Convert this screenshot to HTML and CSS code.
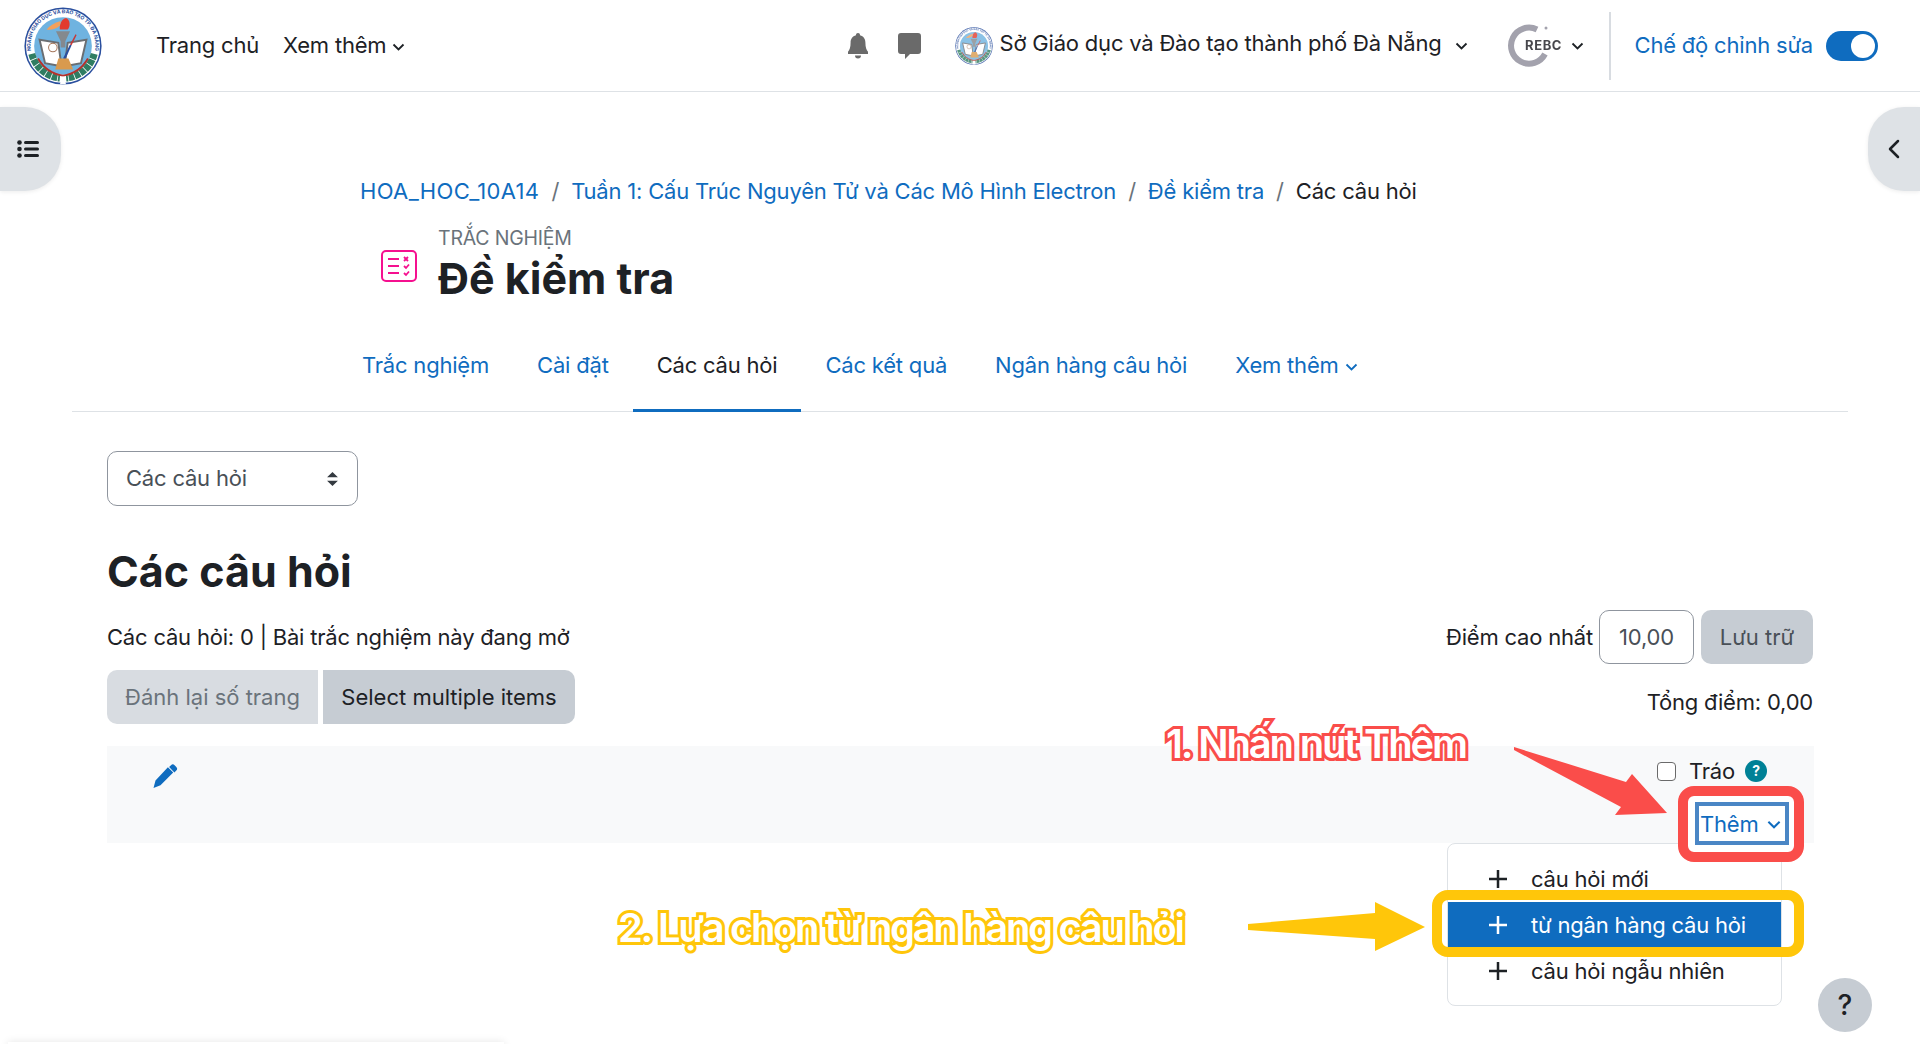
FILE: index.html
```html
<!DOCTYPE html>
<html lang="vi">
<head>
  <meta charset="UTF-8" />
  <meta name="viewport" content="width=device-width, initial-scale=1.0"/>
  <title>Các câu hỏi</title>
  <link rel="stylesheet" href="styles.css">
</head>
<body>
  <svg class="defs" width="0" height="0">
    <defs>
      <path id="arcText" d="M9 56a41.500 41.500 0 1 1 82 0"/>
      <symbol id="logo" viewBox="0 0 100 100">
        <circle cx="50" cy="50" r="49.500" fill="#2a4f9e"/>
        <circle cx="50" cy="50" r="47.500" fill="#fff"/>
        <circle cx="50" cy="50" r="37" fill="#6fb3e0"/>
        <text class="logo-ring"><textPath href="#arcText" startOffset="50%" text-anchor="middle">NGÀNH GIÁO DỤC VÀ ĐÀO TẠO TP. ĐÀ NẴNG</textPath></text>
        <path d="M10 60A41 41 0 0 0 46 91M90 60A41 41 0 0 1 54 91" fill="none" stroke="#2f7d62" stroke-width="9" stroke-dasharray="7 1"/>
        <path d="M18 66c7 12 17 20 32 22 15-2 25-10 32-22" fill="none" stroke="#b5312c" stroke-width="2.500"/>
        <path d="M46 99l4-11 4 11z" fill="#fff"/>
        <path d="M20 42l24 4 4 30-21-4z" fill="#fff" stroke="#6a6e72" stroke-width="2.500"/>
        <path d="M80 42l-24 4-4 30 21-4z" fill="#fff" stroke="#6a6e72" stroke-width="2.500"/>
        <path d="M41 31h18l-6 13v8h-6v-8z" fill="#84898e"/>
        <path d="M46 29c-1-6 2-14 8-15 5 2 6 10 2 15z" fill="#e23b2e"/>
        <path d="M29 29c4-5 10-9 18-11l-1 6c-5 4-11 6-17 5z" fill="#f2a05a"/>
        <path d="M50 66l9-18 2 1-8 18z" fill="#2a4f9e"/>
        <path d="M59 48l7-13 1.500 1-6.500 13z" fill="#c43a3a"/>
        <path d="M44 66h13l6 14H40z" fill="#d99a4e"/>
        <circle cx="37" cy="52" r="5.500" fill="none" stroke="#a5765a" stroke-width="1.300"/>
      </symbol>
    </defs>
  </svg>

  <header class="navbar">
    <svg class="site-logo" aria-hidden="true"><use href="#logo"/></svg>
    <nav class="nav-main">
      <a class="nav-link">Trang chủ</a>
      <a class="nav-link">Xem thêm
        <svg class="chev" viewBox="0 0 12 8"><path d="M1 1.500l5 5 5-5"/></svg>
      </a>
    </nav>
    <div class="nav-right">
      <svg class="ico-bell" viewBox="0 0 20 26"><path d="M10 0a2 2 0 0 1 2 2.200c3.600.8 5.400 3.800 5.400 7.300 0 5 1 7.500 2.600 9.300v2.200H0v-2.200c1.600-1.800 2.600-4.300 2.600-9.300C2.600 6 4.400 3 8 2.200A2 2 0 0 1 10 0zM7 22.500h6a3 3 0 0 1-6 0z"/></svg>
      <svg class="ico-chat" viewBox="0 0 23 26"><path d="M3 0h17a3 3 0 0 1 3 3v15a3 3 0 0 1-3 3h-8l-5 5v-5H3a3 3 0 0 1-3-3V3a3 3 0 0 1 3-3z"/></svg>
      <div class="org">
        <svg class="org-logo" aria-hidden="true"><use href="#logo"/></svg>
        <span class="org-name">Sở Giáo dục và Đào tạo thành phố Đà Nẵng</span>
        <svg class="chev" viewBox="0 0 12 8"><path d="M1 1.500l5 5 5-5"/></svg>
      </div>
      <div class="user">
        <svg class="user-pic" viewBox="0 0 45 42">
          <path d="M29 4.500A18 18 0 1 0 37 29" fill="none" stroke="#a3a2ad" stroke-width="6"/>
          <circle cx="38" cy="3" r="1.500" fill="#a3a2ad"/>
          <text x="17" y="25">REBC</text>
        </svg>
        <svg class="chev" viewBox="0 0 12 8"><path d="M1 1.500l5 5 5-5"/></svg>
      </div>
      <div class="edit-mode">
        <span>Chế độ chỉnh sửa</span>
        <span class="toggle"><i></i></span>
      </div>
    </div>
  </header>

  <button class="drawer drawer-left">
    <svg viewBox="0 0 22 18" width="22" height="18"><g fill="#1d2125"><circle cx="2.500" cy="2.500" r="2.300"/><circle cx="2.500" cy="9" r="2.300"/><circle cx="2.500" cy="15.500" r="2.300"/><rect x="7" y="1" width="15" height="3" rx="1.500"/><rect x="7" y="7.500" width="15" height="3" rx="1.500"/><rect x="7" y="14" width="15" height="3" rx="1.500"/></g></svg>
  </button>
  <button class="drawer drawer-right">
    <svg viewBox="0 0 12 20" width="12" height="20"><path d="M10 2L2 10l8 8" fill="none" stroke="#1d2125" stroke-width="2.500" stroke-linecap="round" stroke-linejoin="round"/></svg>
  </button>

  <main class="page">
    <ol class="crumbs">
      <li><a class="course">HOA_HOC_10A14</a></li>
      <li><a>Tuần 1: Cấu Trúc Nguyên Tử và Các Mô Hình Electron</a></li>
      <li><a>Đề kiểm tra</a></li>
      <li>Các câu hỏi</li>
    </ol>

    <div class="page-head">
      <svg class="quiz-icon" viewBox="0 0 36 32">
        <rect x="1" y="1" width="34" height="30" rx="4" fill="none" stroke="#f5108f" stroke-width="2"/>
        <path d="M7 9h11M7 16h11M7 23h11" stroke="#f5108f" stroke-width="2" fill="none"/>
        <path d="M23 7l4 4m0-4l-4 4M23 16l2 2 3-3.500M23 23l2 2 3-3.500" stroke="#f5108f" stroke-width="1.800" fill="none"/>
      </svg>
      <div>
        <div class="head-kicker">TRẮC NGHIỆM</div>
        <h1>Đề kiểm tra</h1>
      </div>
    </div>

    <nav class="tabs">
      <a>Trắc nghiệm</a>
      <a>Cài đặt</a>
      <a class="active">Các câu hỏi</a>
      <a>Các kết quả</a>
      <a>Ngân hàng câu hỏi</a>
      <a>Xem thêm <svg class="chev" viewBox="0 0 12 8"><path d="M1 1.500l5 5 5-5"/></svg></a>
    </nav>

    <section class="content">
      <div class="fake-select">
        <span>Các câu hỏi</span>
        <svg viewBox="0 0 12 18" width="13" height="16" preserveAspectRatio="none"><path d="M6 1l5 6H1zM6 17l5-6H1z" fill="#343a40"/></svg>
      </div>

      <h2>Các câu hỏi</h2>

      <div class="info-row">
        <p>Các câu hỏi: 0 | Bài trắc nghiệm này đang mở</p>
        <div class="grade">
          <label>Điểm cao nhất</label>
          <span class="grade-input">10,00</span>
          <button class="btn btn-save">Lưu trữ</button>
        </div>
      </div>

      <div class="tools-row">
        <div class="btn-group">
          <button class="btn btn-muted">Đánh lại số trang</button>
          <button class="btn btn-second">Select multiple items</button>
        </div>
        <span class="total">Tổng điểm: 0,00</span>
      </div>

      <div class="band">
        <svg class="pencil" viewBox="0 0 24 24"><path d="M17.500 1.200a2.600 2.600 0 0 1 3.600 0l1.700 1.700a2.600 2.600 0 0 1 0 3.600l-1.900 1.900-5.300-5.300zM14.400 3.300l5.300 5.300L7 21.300 0 24l2-7.400z"/></svg>
        <div class="band-right">
          <div class="shuffle">
            <span class="check"></span>
            <span>Tráo</span>
            <span class="help-dot">?</span>
          </div>
          <div class="add-btn">Thêm <svg class="chev" viewBox="0 0 12 8"><path d="M1 1.500l5 5 5-5"/></svg></div>
        </div>
      </div>
    </section>
  </main>

  <ul class="add-menu">
    <li><svg class="plus" viewBox="0 0 18 18"><path d="M9 0v18M0 9h18"/></svg>câu hỏi mới</li>
    <li class="on"><svg class="plus" viewBox="0 0 18 18"><path d="M9 0v18M0 9h18"/></svg>từ ngân hàng câu hỏi</li>
    <li><svg class="plus" viewBox="0 0 18 18"><path d="M9 0v18M0 9h18"/></svg>câu hỏi ngẫu nhiên</li>
  </ul>

  <button class="help-fab">?</button>
  <div class="foot-shadow"></div>

  <!-- ghi chu tren anh -->
  <div class="note note-red">1. Nhấn nút Thêm</div>
  <div class="note note-yellow">2. Lựa chọn từ ngân hàng câu hỏi</div>
  <div class="mark mark-red"></div>
  <div class="mark mark-yellow"></div>
  <svg class="arrows" viewBox="0 0 1920 1044">
    <polygon points="1514,747 1626,782 1632,774 1667,813 1615,815 1621,807 1514,750" fill="#fa4d4a"/>
    <polygon points="1248,924 1375,913 1375,902 1425,927 1375,951 1375,939 1248,930" fill="#ffc60a"/>
  </svg>
</body>
</html>
```

FILE: styles.css
```css
* {
  box-sizing: border-box;
}
html, body {
  margin: 0;
  height: 100%;
}
body {
  position: relative;
  width: 1920px;
  height: 1044px;
  overflow: hidden;
  background: #fff;
  color: #1d2125;
  font-family: Inter, "Noto Sans", sans-serif;
  font-size: 22px;
  letter-spacing: -.2px;
  line-height: 1.5;
}
a {
  color: #0f6cbf;
  text-decoration: none;
}
.defs {
  position: absolute;
}
.chev {
  width: 13px;
  height: 8px;
  fill: none;
  stroke: #1d2125;
  stroke-width: 1.800;
}
.logo-ring {
  font-size: 6.500px;
  font-weight: 700;
  letter-spacing: 0;
  fill: #2a4f9e;
}

/* navbar */
.navbar {
  display: flex;
  align-items: center;
  height: 92px;
  padding: 0 42px 0 24px;
  border-bottom: 1px solid #dee2e6;
}
.site-logo {
  width: 78px;
  height: 78px;
}
.nav-main {
  display: flex;
  gap: 24px;
  margin-left: 54px;
}
.nav-link {
  color: #1d2125;
}
.nav-link .chev {
  vertical-align: 2px;
}
.nav-right {
  display: flex;
  align-items: center;
  margin-left: auto;
}
.ico-bell {
  width: 20px;
  height: 26px;
  fill: #6a6a6a;
}
.ico-chat {
  width: 23px;
  height: 26px;
  margin-left: 30px;
  fill: #6a6a6a;
}
.org {
  display: flex;
  align-items: center;
  margin-left: 34px;
}
.org-logo {
  width: 38px;
  height: 42px;
  border-radius: 50%;
  opacity: .8;
  filter: blur(.5px);
}
.org-name {
  margin: -4px 0 0 7px;
}
.org .chev {
  margin-left: 13px;
}
.user {
  display: flex;
  align-items: center;
  margin-left: 40px;
}
.user-pic {
  width: 45px;
  height: 42px;
  overflow: visible;
  filter: blur(.4px);
}
.user-pic text {
  font-size: 13px;
  font-weight: 700;
  letter-spacing: .6px;
  fill: #47474c;
}
.user .chev {
  margin-left: 18px;
}
.edit-mode {
  display: flex;
  align-items: center;
  gap: 13px;
  height: 68px;
  margin-left: 25px;
  padding-left: 24px;
  border-left: 2px solid #d8dce1;
  color: #0f6cbf;
}
.toggle {
  display: flex;
  align-items: center;
  justify-content: flex-end;
  width: 52px;
  height: 30px;
  padding-right: 3px;
  border-radius: 15px;
  background: #0f6cbf;
}
.toggle i {
  width: 24px;
  height: 24px;
  border-radius: 50%;
  background: #fff;
}

/* drawer buttons */
.drawer {
  position: absolute;
  top: 107px;
  display: flex;
  align-items: center;
  justify-content: center;
  height: 84px;
  padding: 0;
  border: none;
  background: #dee2e6;
  box-shadow: 0 1px 4px rgba(0,0,0,.08);
}
.drawer-left {
  left: 0;
  width: 61px;
  padding-right: 6px;
  border-radius: 0 36px 36px 0;
}
.drawer-right {
  right: 0;
  width: 52px;
  border-radius: 36px 0 0 36px;
}

/* page */
.page {
  padding: 0 72px;
}
.crumbs {
  display: flex;
  margin: 83px 0 0;
  padding: 0 0 0 288px;
  list-style: none;
}
.crumbs li + li::before {
  content: "/";
  padding: 0 12px;
  color: #6a737b;
}
.course {
  letter-spacing: .35px;
}
.page-head {
  display: flex;
  align-items: center;
  margin-top: 18px;
  padding-left: 309px;
}
.quiz-icon {
  width: 36px;
  height: 32px;
  margin: 0 21px 0 0;
}
.head-kicker {
  color: #6a737b;
  font-size: 19.500px;
  line-height: 24px;
}
h1 {
  margin: 0;
  font-size: 43px;
  font-weight: 700;
  letter-spacing: 0;
  line-height: 56px;
}
.tabs {
  display: flex;
  margin-top: 19px;
  padding-left: 266px;
  border-bottom: 1px solid #dee2e6;
}
.tabs a {
  margin-bottom: -1px;
  padding: 24px 24px 27px;
  border-bottom: 3px solid transparent;
}
.tabs a.active {
  border-bottom-color: #0f6cbf;
  color: #1d2125;
}
.tabs .chev {
  stroke: #0f6cbf;
  vertical-align: 2px;
}
.content {
  padding: 39px 35px 0;
}
.fake-select {
  display: flex;
  align-items: center;
  justify-content: space-between;
  width: 251px;
  height: 55px;
  padding: 0 18px;
  border: 1px solid #8f959e;
  border-radius: 10px;
  color: #495057;
}
h2 {
  margin: 36px 0 0;
  font-size: 43px;
  font-weight: 700;
  letter-spacing: 0;
  line-height: 58px;
}
.info-row, .tools-row {
  display: flex;
  align-items: center;
  justify-content: space-between;
}
.info-row {
  margin-top: 10px;
}
.info-row p {
  margin: 0;
}
.grade {
  display: flex;
  align-items: center;
}
.grade-input {
  width: 95px;
  height: 54px;
  margin: 0 7px 0 6px;
  border: 1px solid #8f959e;
  border-radius: 10px;
  color: #495057;
  line-height: 52px;
  text-align: center;
}
.btn {
  height: 54px;
  border: none;
  font: inherit;
  color: #1d2125;
  background: #c6ccd3;
}
.btn-save {
  width: 112px;
  border-radius: 10px;
  color: #495057;
}
.tools-row {
  margin-top: 6px;
}
.total {
  margin-top: 10px;
}
.btn-group {
  display: flex;
  gap: 5px;
}
.btn-muted {
  width: 211px;
  border-radius: 10px 0 0 10px;
  background: #d8dce1;
  color: #6a737b;
}
.btn-second {
  width: 252px;
  border-radius: 0 10px 10px 0;
  letter-spacing: 0;
}
.band {
  display: flex;
  justify-content: space-between;
  width: 1707px;
  height: 97px;
  margin-top: 22px;
  background: #f8f9fa;
}
.pencil {
  width: 25px;
  height: 24px;
  margin: 18px 0 0 46px;
  fill: #0f6cbf;
}
.band-right {
  display: flex;
  flex-direction: column;
  align-items: flex-end;
  padding-right: 25px;
}
.shuffle {
  display: flex;
  align-items: center;
  margin-top: 9px;
  padding-right: 22px;
  line-height: 32px;
}
.check {
  width: 19px;
  height: 19px;
  margin-right: 13px;
  border: 1.500px solid #6a6a6a;
  border-radius: 4px;
  background: #fff;
}
.help-dot {
  width: 22px;
  height: 22px;
  margin-left: 10px;
  border-radius: 50%;
  background: #008196;
  color: #fff;
  font-size: 14px;
  font-weight: 700;
  line-height: 22px;
  text-align: center;
}
.add-btn {
  position: relative;
  z-index: 3;
  display: flex;
  align-items: center;
  justify-content: space-between;
  width: 94px;
  height: 44px;
  margin-top: 15px;
  padding: 2px 4px 0 1px;
  border: 4px solid #4a86c5;
  color: #0f6cbf;
  background: #fff;
  box-shadow: 0 0 0 7px #fff;
}
.add-btn .chev {
  width: 14px;
  height: 9px;
  stroke: #0f6cbf;
}

/* menu over the band */
.add-menu {
  position: absolute;
  left: 1447px;
  top: 843px;
  width: 335px;
  height: 163px;
  margin: 0;
  padding: 12px 0 0;
  list-style: none;
  background: #fff;
  border: 1px solid #dee2e6;
  border-radius: 8px;
}
.add-menu li {
  display: flex;
  align-items: center;
  height: 46px;
  padding-left: 41px;
}
.add-menu .on {
  background: #0f6cbf;
  color: #fff;
}
.plus {
  width: 18px;
  height: 18px;
  margin-right: 24px;
  fill: none;
  stroke: currentColor;
  stroke-width: 2.500;
}
.help-fab {
  position: absolute;
  left: 1818px;
  top: 978px;
  width: 54px;
  height: 54px;
  border: none;
  border-radius: 50%;
  background: #c6ccd3;
  color: #1d2125;
  font: 500 28px Inter, sans-serif;
}
.foot-shadow {
  position: absolute;
  left: 8px;
  right: 1416px;
  top: 1042px;
  height: 10px;
  box-shadow: 0 0 8px rgba(0,0,0,.1);
}

/* annotations */
.note {
  position: absolute;
  z-index: 5;
  color: #fff;
  font-size: 40px;
  font-weight: 600;
  line-height: 1;
  paint-order: stroke fill;
  white-space: nowrap;
}
.note-red {
  left: 1166px;
  top: 724px;
  letter-spacing: -2.200px;
  -webkit-text-stroke: 6px #fa4d4a;
}
.note-yellow {
  left: 618px;
  top: 908px;
  letter-spacing: -2.350px;
  -webkit-text-stroke: 6px #ffc60a;
}
.mark {
  position: absolute;
  z-index: 4;
  border-style: solid;
  border-width: 10px;
  border-radius: 16px;
}
.mark-red {
  left: 1678px;
  top: 786px;
  width: 126px;
  height: 76px;
  border-color: #fa4d4a;
}
.mark-yellow {
  left: 1432px;
  top: 890px;
  width: 372px;
  height: 67px;
  border-color: #ffc60a;
}
.arrows {
  position: absolute;
  z-index: 5;
  left: 0;
  top: 0;
  width: 1920px;
  height: 1044px;
  pointer-events: none;
}
```
